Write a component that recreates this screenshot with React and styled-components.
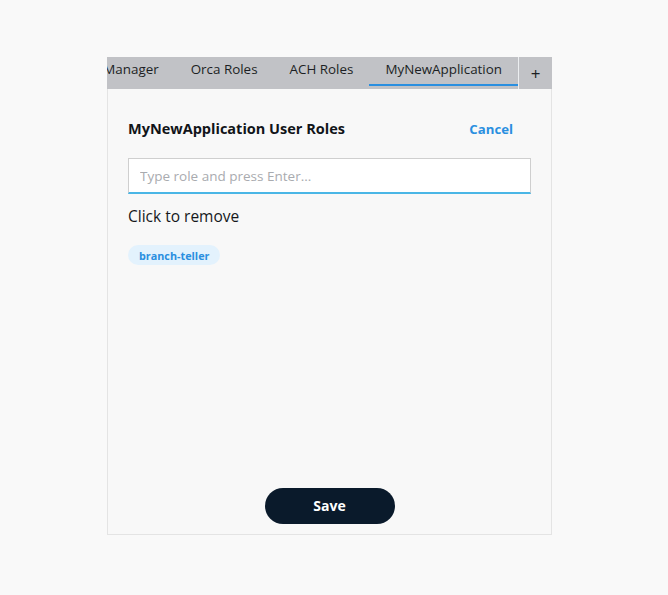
import React from 'react';
import styled, { createGlobalStyle } from 'styled-components';

const GlobalStyle = createGlobalStyle`
  html, body {
    margin: 0;
    padding: 0;
    background: #f9f9f9;
    font-family: 'Open Sans', 'Noto Sans', sans-serif;
  }
`;

const tabs = ['Manager', 'Orca Roles', 'ACH Roles', 'MyNewApplication'];

function App() {
  return (
    <>
      <GlobalStyle />
      <Page>
        <Panel>
          <TabBar>
            <TabList>
              {tabs.map((t) => (
                <Tab key={t} active={t === 'MyNewApplication'}>
                  {t}
                </Tab>
              ))}
            </TabList>
            <AddTab>+</AddTab>
          </TabBar>
          <Body>
            <Header>
              <Title>MyNewApplication User Roles</Title>
              <Cancel>Cancel</Cancel>
            </Header>
            <RoleInput placeholder="Type role and press Enter..." />
            <Hint>Click to remove</Hint>
            <Chips>
              <Chip>branch-teller</Chip>
            </Chips>
            <Footer>
              <SaveButton>Save</SaveButton>
            </Footer>
          </Body>
        </Panel>
      </Page>
    </>
  );
}

export default App;

const Page = styled.div`
  padding: 57px 0 60px 107px;
`;

const Panel = styled.div`
  width: 445px;
  height: 478px;
  display: flex;
  flex-direction: column;
  box-sizing: border-box;
`;

const TabBar = styled.div`
  display: flex;
  height: 32px;
  background: #c1c2c6;
  flex-shrink: 0;
`;

const TabList = styled.div`
  flex: 1;
  display: flex;
  justify-content: flex-end;
  overflow: hidden;
  min-width: 0;
`;

const Tab = styled.div`
  flex-shrink: 0;
  padding: 0 16px 3px;
  height: 29px;
  box-sizing: border-box;
  display: flex;
  align-items: center;
  font-size: 13.4px;
  color: #1c1f24;
  white-space: nowrap;
  border-bottom: 2px solid ${(p) => (p.active ? '#2a8fe0' : 'transparent')};
`;

const AddTab = styled.div`
  width: 33px;
  flex-shrink: 0;
  border-left: 1px solid #eceef0;
  display: flex;
  align-items: center;
  justify-content: center;
  font-size: 17px;
  color: #1c1f24;
`;

const Body = styled.div`
  flex: 1;
  display: flex;
  flex-direction: column;
  background: #f8f8f8;
  border: 1px solid #e4e4e4;
  border-top: none;
  padding: 29px 20px 10px 20px;
`;

const Header = styled.div`
  display: flex;
  justify-content: space-between;
  align-items: center;
  padding-right: 18px;
  height: 21px;
`;

const Title = styled.div`
  font-size: 14.5px;
  font-weight: 700;
  color: #111418;
`;

const Cancel = styled.div`
  font-size: 13.2px;
  font-weight: 700;
  color: #2a8fe0;
  cursor: pointer;
`;

const RoleInput = styled.input`
  margin-top: 19px;
  height: 36px;
  box-sizing: border-box;
  background: #fff;
  border: 1px solid #cfcfcf;
  border-bottom: 2px solid #4ab6e6;
  padding: 0 11px;
  font-family: inherit;
  font-size: 13.5px;
  outline: none;
  &::placeholder {
    color: #a9abaf;
  }
`;

const Hint = styled.div`
  margin-top: 11px;
  font-size: 15.5px;
  color: #15181c;
`;

const Chips = styled.div`
  display: flex;
  gap: 8px;
  margin-top: 18px;
`;

const Chip = styled.span`
  height: 20px;
  padding: 0 11px;
  border-radius: 10px;
  background: #e3f2fd;
  color: #2a8fe0;
  font-size: 10.8px;
  font-weight: 700;
  display: flex;
  align-items: center;
`;

const Footer = styled.div`
  margin-top: auto;
  display: flex;
  justify-content: center;
`;

const SaveButton = styled.button`
  width: 130px;
  height: 36px;
  border-radius: 18px;
  border: none;
  background: #0a1a2b;
  color: #fff;
  font-family: inherit;
  font-size: 14px;
  font-weight: 700;
  padding-bottom: 2px;
  cursor: pointer;
`;
